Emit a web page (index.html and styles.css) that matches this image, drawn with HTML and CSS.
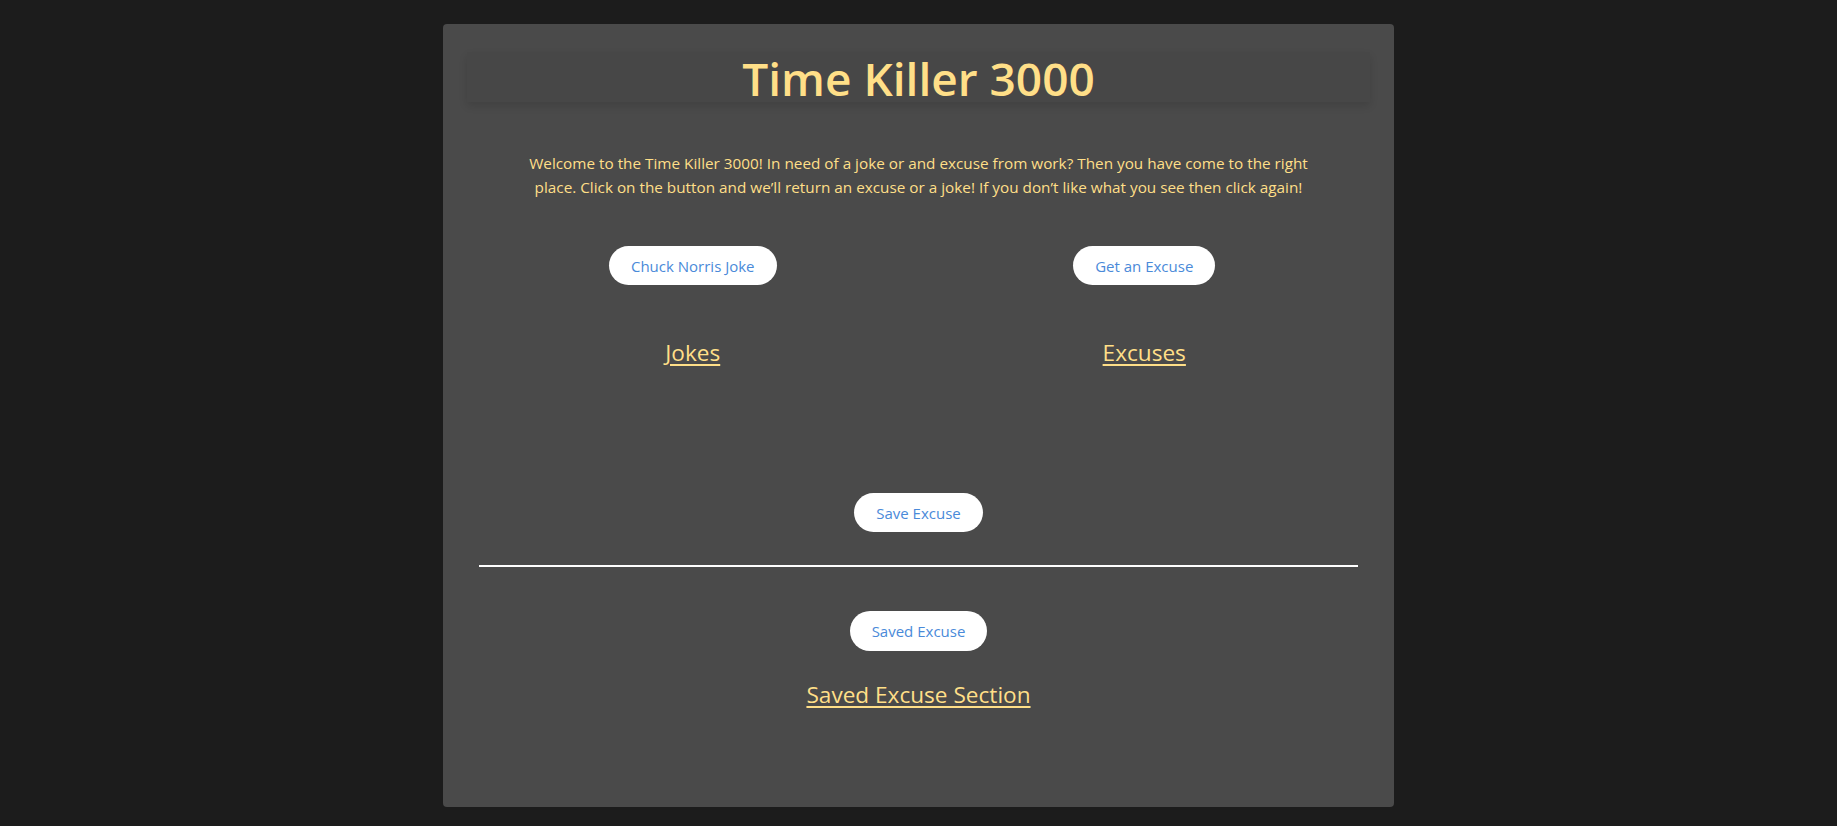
FILE: index.html
```html
<!DOCTYPE html>
<html lang="en">
<head>
<meta charset="utf-8">
<title>Time Killer 3000</title>
<link rel="stylesheet" href="styles.css">
</head>
<body>
<main class="card">
  <header class="header">
    <h1 class="title">Time Killer 3000</h1>
  </header>
  <p class="intro">Welcome to the Time Killer 3000! In need of a joke or and excuse from work? Then you have come to the right place. Click on the button and we’ll return an excuse or a joke! If you don’t like what you see then click again!</p>
  <section class="columns">
    <div class="col">
      <button class="btn">Chuck Norris Joke</button>
      <h2 class="col-title">Jokes</h2>
    </div>
    <div class="col">
      <button class="btn">Get an Excuse</button>
      <h2 class="col-title">Excuses</h2>
    </div>
  </section>
  <div class="save-row">
    <button class="btn">Save Excuse</button>
  </div>
  <hr class="divider">
  <section class="saved">
    <button class="btn btn-tall">Saved Excuse</button>
    <h2 class="col-title saved-title">Saved Excuse Section</h2>
  </section>
</main>
</body>
</html>
```

FILE: styles.css
```css
html, body {
  margin: 0;
  padding: 0;
}
body {
  background: #1c1c1c;
  font-family: "Open Sans", "Noto Sans", sans-serif;
}
.card {
  box-sizing: border-box;
  width: 951px;
  height: 783px;
  margin: 24px auto 0;
  padding: 28px 24px 0;
  background: #4a4a4a;
  border-radius: 4px;
  display: flex;
  flex-direction: column;
}
.header {
  flex: none;
  height: 50px;
  background: #474747;
  box-shadow: 0 4px 8px rgba(0, 0, 0, 0.12);
  display: flex;
  justify-content: center;
  align-items: flex-start;
}
.title {
  margin: 0;
  font-size: 46px;
  font-weight: 600;
  line-height: 52px;
  color: #ffdf88;
}
.intro {
  width: 800px;
  margin: 49px auto 0;
  font-size: 15.3px;
  line-height: 24px;
  text-align: center;
  color: #ffdf88;
}
.columns {
  display: grid;
  grid-template-columns: 1fr 1fr;
  margin-top: 47px;
}
.col {
  display: flex;
  flex-direction: column;
  align-items: center;
}
.btn {
  height: 39px;
  padding: 0 22px;
  border: none;
  border-radius: 20px;
  background: #ffffff;
  color: #4a8ad9;
  font-family: inherit;
  font-size: 15px;
}
.btn-tall {
  height: 40px;
}
.col-title {
  margin: 53px 0 0;
  font-size: 22.6px;
  font-weight: 400;
  line-height: 30px;
  color: #ffdf88;
  text-decoration: underline;
  text-decoration-thickness: 2px;
  text-underline-offset: 3px;
}
.saved-title {
  margin-top: 29px;
}
.save-row {
  display: flex;
  justify-content: center;
  margin-top: 125px;
}
.divider {
  flex: none;
  width: 879px;
  margin: 33px auto 0;
  border: none;
  height: 2px;
  background: #ffffff;
}
.saved {
  display: flex;
  flex-direction: column;
  align-items: center;
  margin-top: 44px;
}
```
